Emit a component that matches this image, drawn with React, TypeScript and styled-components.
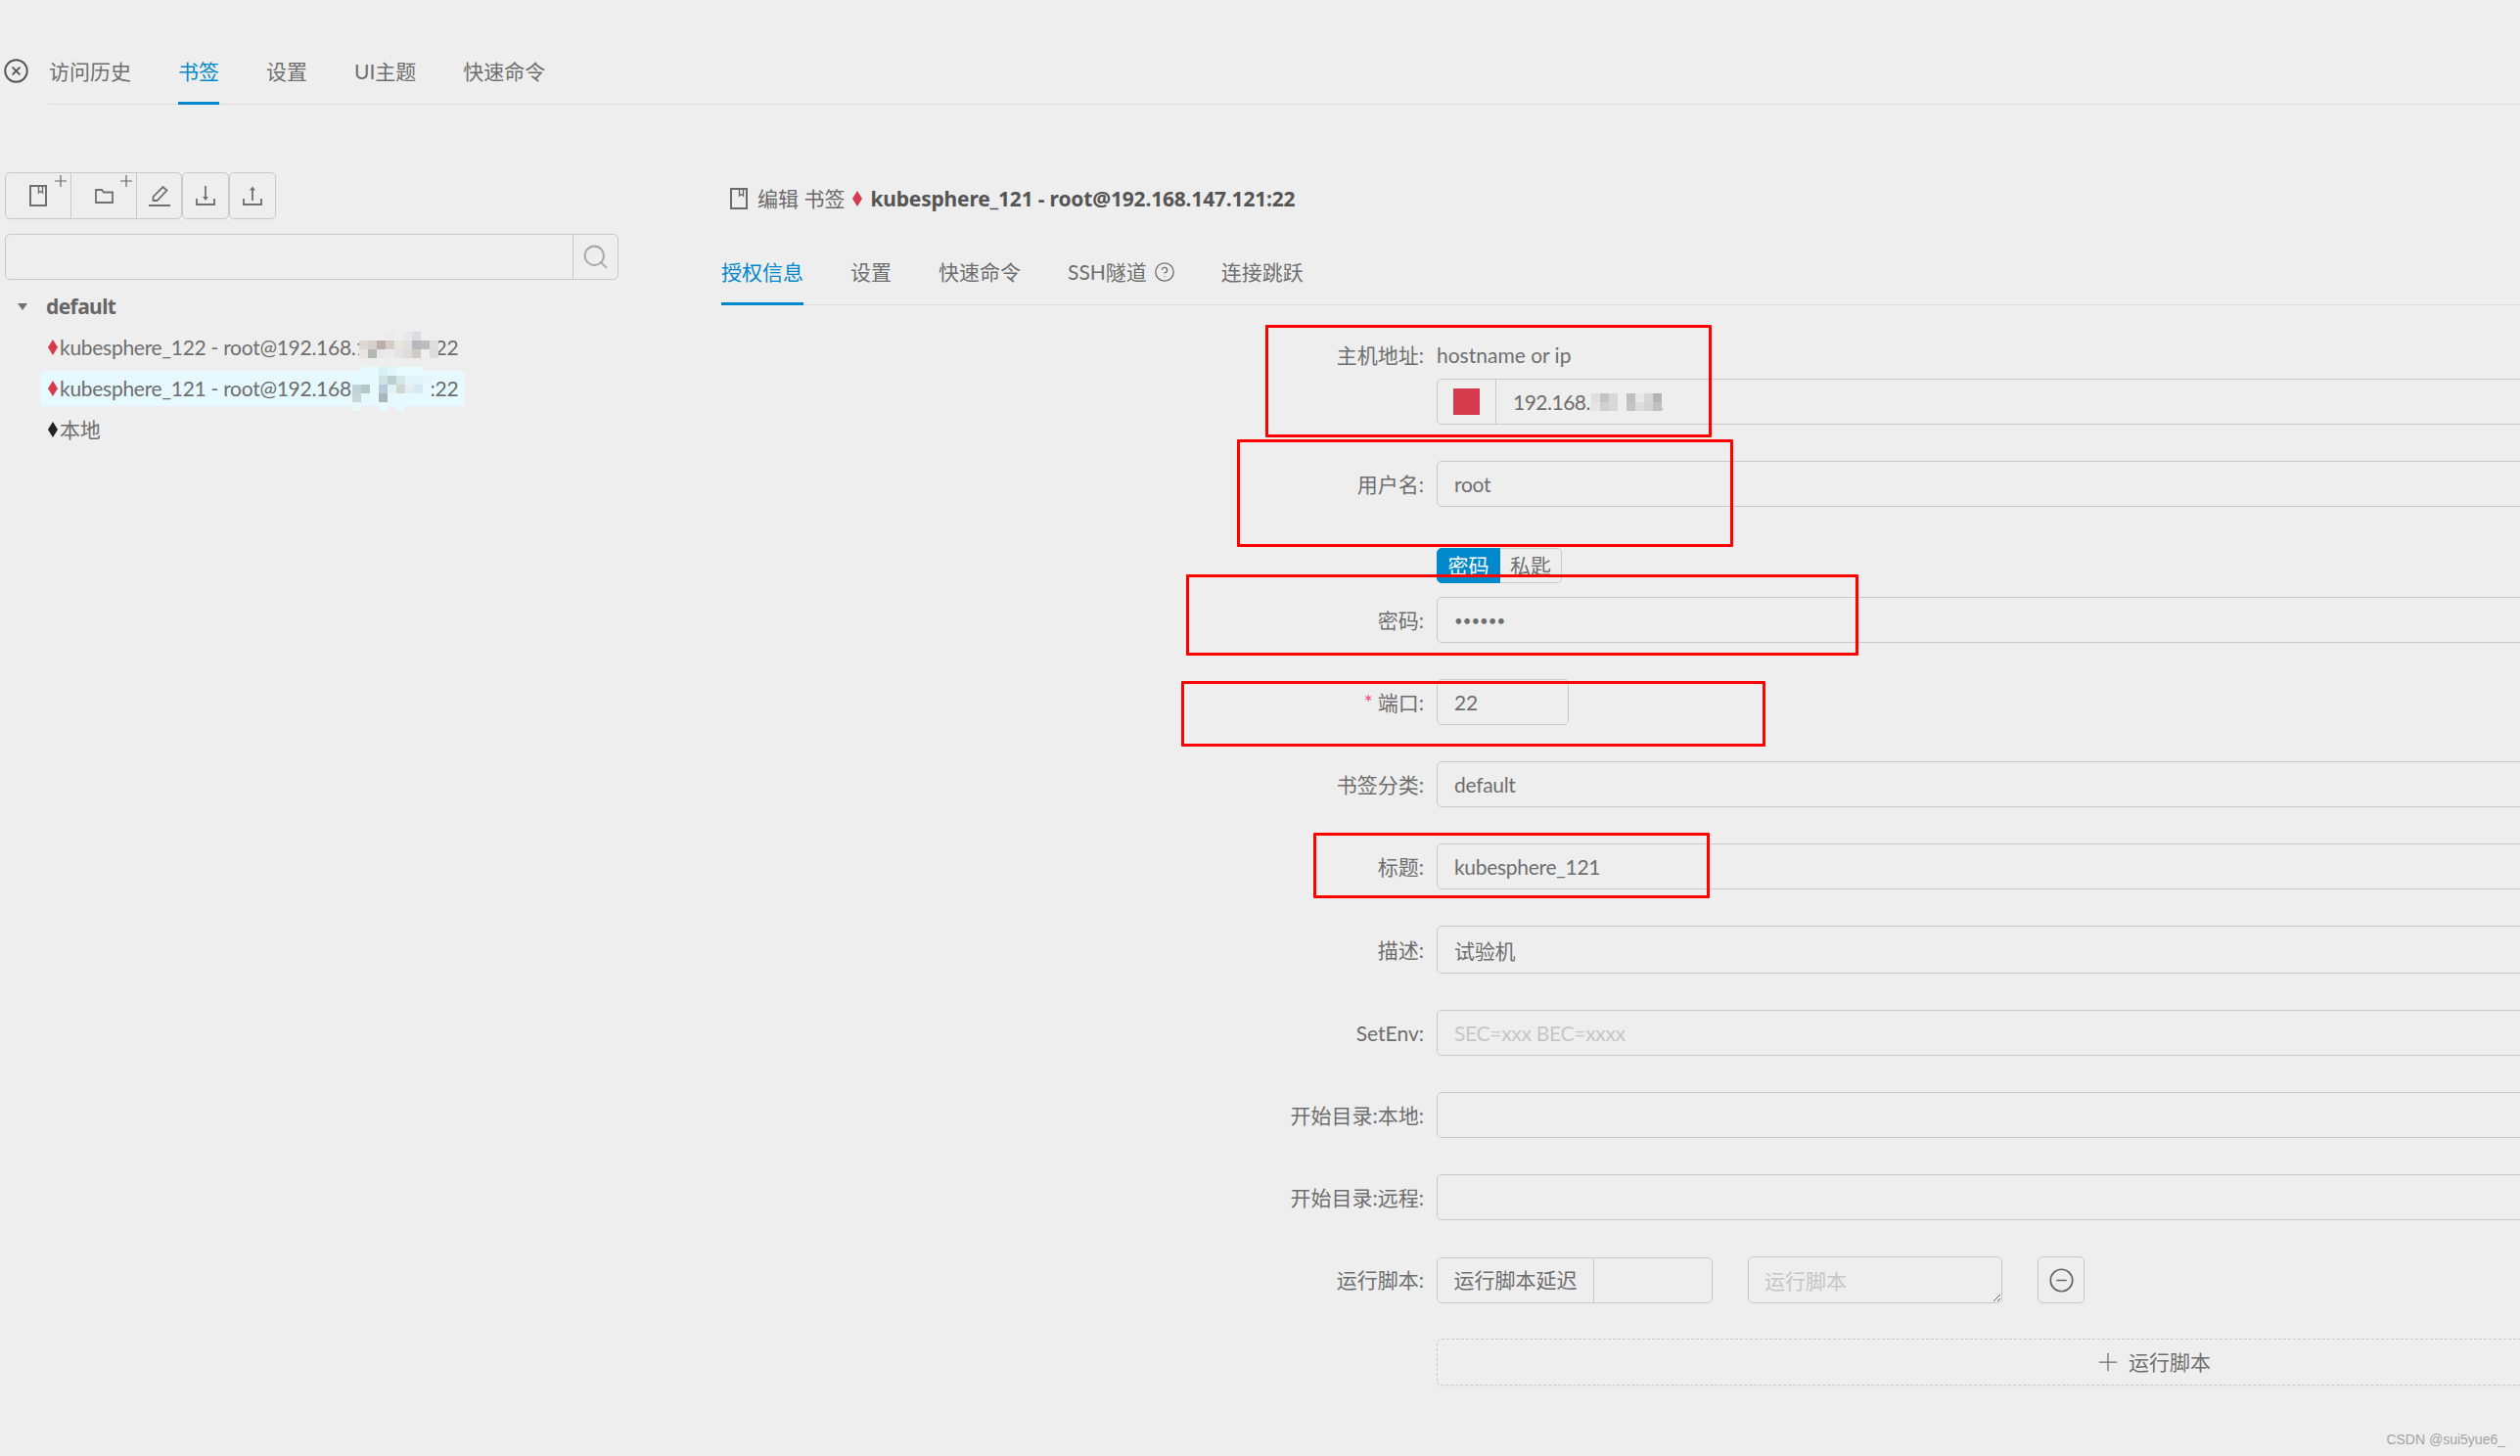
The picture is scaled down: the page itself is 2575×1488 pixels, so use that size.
import styled, { createGlobalStyle } from 'styled-components';
import { CircleHelp, CircleMinus, CircleX, Plus, Search } from 'lucide-react';

const BLUE = '#0088cc';
const LINE = '#c9c9c9';
const TEXT = '#6e6e6e';

const GlobalStyle = createGlobalStyle`
  html, body {
    margin: 0;
    padding: 0;
    background: #eeeeee;
  }
  * {
    box-sizing: border-box;
  }
`;

const Page = styled.div`
  position: relative;
  width: 2575px;
  height: 1488px;
  overflow: hidden;
  background: #eeeeee;
  color: ${TEXT};
  font-family: Lato, "Noto Sans CJK SC", sans-serif;
  font-size: 21px;
  line-height: 32px;
`;

const Header = styled.div`
  display: flex;
  align-items: flex-start;
`;

const CloseButton = styled.div`
  display: flex;
  width: 50px;
  padding: 59px 0 0 3px;
  color: #555;
`;

const TabBar = styled.div`
  display: flex;
  flex: 1;
  gap: 48px;
  border-bottom: 1px solid #dcdcdc;
`;

const Tab = styled.div<{ $active?: boolean; $top: number }>`
  display: flex;
  align-items: center;
  gap: 7px;
  margin-bottom: -1px;
  padding: ${(p) => p.$top}px 0 15px;
  border-bottom: 3px solid ${(p) => (p.$active ? BLUE : 'transparent')};
  color: ${(p) => (p.$active ? BLUE : TEXT)};
`;

const Main = styled.div`
  display: flex;
`;

const Sidebar = styled.div`
  flex: none;
  width: 737px;
  padding: 69px 0 0 5px;
`;

const Toolbar = styled.div`
  display: flex;
  height: 48px;
`;

const ToolGroup = styled.div`
  display: flex;
  overflow: hidden;
  border: 1px solid ${LINE};
  border-radius: 5px;
  box-shadow: 0 2px 0 rgba(0, 0, 0, 0.015);
`;

const ToolButton = styled.div<{ $width: number }>`
  position: relative;
  display: flex;
  align-items: center;
  justify-content: center;
  width: ${(p) => p.$width}px;
  color: #707070;

  & + & {
    border-left: 1px solid ${LINE};
  }
`;

const CornerPlus = styled.svg`
  position: absolute;
  top: 2px;
  right: 4px;
`;

const SearchBox = styled.div`
  display: flex;
  width: 627px;
  height: 47px;
  margin-top: 15px;
  border: 1px solid ${LINE};
  border-radius: 5px;
`;

const SearchInput = styled.div`
  flex: 1;
`;

const SearchButton = styled.div`
  display: flex;
  align-items: center;
  justify-content: center;
  width: 46px;
  border-left: 1px solid ${LINE};
  color: #aaaaaa;
`;

const Tree = styled.div`
  margin-top: 6px;
`;

const GroupRow = styled.div`
  display: flex;
  align-items: center;
  height: 42px;
  padding-left: 13px;
  font-family: "Noto Sans", "Noto Sans CJK SC", sans-serif;
  font-weight: 700;
  font-size: 21px;
  letter-spacing: -0.6px;
  color: #666;
`;

const Caret = styled.span`
  width: 0;
  height: 0;
  margin-right: 19px;
  border-left: 5px solid transparent;
  border-right: 5px solid transparent;
  border-top: 7px solid #707070;
`;

const TreeRow = styled.div<{ $selected?: boolean }>`
  position: relative;
  display: flex;
  align-items: center;
  width: fit-content;
  height: 36px;
  margin: 3px 0 6px 36px;
  padding: 0 7px 0 8px;
  border-radius: 4px;
  background: ${(p) => (p.$selected ? '#e6f9ff' : 'transparent')};
  letter-spacing: -0.28px;
`;

const Content = styled.div`
  flex: none;
  width: 1838px;
`;

const EditTitle = styled.div`
  display: flex;
  align-items: center;
  height: 32px;
  margin: 80px 0 43px 9px;
  color: #6a6a6a;
`;

const TitleLead = styled.span`
  margin: 0 8px 0 10px;
`;

const TitleHost = styled.b`
  margin-left: 8px;
  color: #555555;
  font-family: "Noto Sans", "Noto Sans CJK SC", sans-serif;
  font-weight: 700;
  letter-spacing: -0.18px;
`;

const InnerTabs = styled(TabBar)`
  flex: none;
`;

const HelpIcon = styled(CircleHelp)`
  margin-right: -1px;
`;

const Form = styled.div`
  padding-top: 27px;
`;

const Row = styled.div<{ $gap?: number }>`
  display: flex;
  align-items: center;
  margin-bottom: ${(p) => p.$gap ?? 37}px;
`;

const Label = styled.div`
  flex: none;
  width: 731px;
  padding-right: 13px;
  text-align: right;
  white-space: nowrap;
`;

const Star = styled.span`
  margin-right: 5px;
  color: #f0487a;
`;

const Hint = styled.div`
  height: 48px;
  line-height: 47px;
`;

const FieldBox = styled.input<{ $width?: number; $height?: number }>`
  display: block;
  flex: none;
  width: ${(p) => p.$width ?? 1462}px;
  height: ${(p) => p.$height ?? 47}px;
  padding: 0 17px;
  border: 1px solid ${LINE};
  border-radius: 5px;
  outline: none;
  background: transparent;
  color: ${TEXT};
  font: inherit;
  letter-spacing: -0.3px;

  &::placeholder {
    color: #c6c6c6;
  }
`;

const PasswordBox = styled(FieldBox)`
  font-size: 15px;
  letter-spacing: 0;
`;

const Addon = styled.div<{ $width?: number }>`
  flex: none;
  display: flex;
  align-items: center;
  justify-content: center;
  width: ${(p) => p.$width}px;
  height: 100%;
  border-right: 1px solid ${LINE};
`;

const InputGroup = styled.div<{ $width?: number }>`
  position: relative;
  display: flex;
  flex: none;
  align-items: center;
  width: ${(p) => p.$width ?? 1462}px;
  height: 47px;
  border: 1px solid ${LINE};
  border-radius: 5px;
`;

const GroupText = styled.div`
  padding-left: 17px;
  letter-spacing: -0.5px;
`;

const Swatch = styled.span`
  width: 27px;
  height: 27px;
  background: #d63b4e;
`;

const RadioGroup = styled.div`
  display: flex;
  height: 36px;
  margin-bottom: 14px;
  margin-left: 731px;
`;

const Radio = styled.div<{ $active?: boolean }>`
  display: flex;
  align-items: center;
  justify-content: center;
  width: ${(p) => (p.$active ? 65 : 63)}px;
  border: 1px solid ${(p) => (p.$active ? BLUE : LINE)};
  border-left-width: ${(p) => (p.$active ? 1 : 0)}px;
  border-radius: ${(p) => (p.$active ? '5px 0 0 5px' : '0 5px 5px 0')};
  background: ${(p) => (p.$active ? BLUE : 'transparent')};
  color: ${(p) => (p.$active ? '#ffffff' : TEXT)};
`;

const ScriptArea = styled.textarea`
  flex: none;
  width: 260px;
  height: 48px;
  margin-left: 36px;
  padding: 8px 16px;
  border: 1px solid ${LINE};
  border-radius: 5px;
  outline: none;
  background: transparent;
  font: inherit;

  &::placeholder {
    color: #c6c6c6;
  }
`;

const IconButton = styled.div`
  display: flex;
  flex: none;
  align-items: center;
  justify-content: center;
  width: 48px;
  height: 48px;
  margin-left: 36px;
  border: 1px solid ${LINE};
  border-radius: 5px;
  box-shadow: 0 2px 0 rgba(0, 0, 0, 0.015);
  color: #666;
`;

const DashedButton = styled.div`
  display: flex;
  align-items: center;
  justify-content: center;
  gap: 6px;
  width: 1462px;
  height: 48px;
  margin-left: 731px;
  border: 1px dashed ${LINE};
  border-radius: 5px;
  box-shadow: 0 2px 0 rgba(0, 0, 0, 0.015);
`;

const Mosaic = styled.svg<{ $left: number; $top: number }>`
  position: absolute;
  left: ${(p) => p.$left}px;
  top: ${(p) => p.$top}px;
`;

const RedBox = styled.div<{ $x: number; $y: number; $w: number; $h: number }>`
  position: absolute;
  left: ${(p) => p.$x}px;
  top: ${(p) => p.$y}px;
  width: ${(p) => p.$w}px;
  height: ${(p) => p.$h}px;
  border: 3px solid #ff0000;
  border-radius: 1px;
  pointer-events: none;
`;

const Watermark = styled.div`
  position: absolute;
  right: 15px;
  bottom: 8px;
  color: #a3a3a3;
  font-family: "Liberation Sans", sans-serif;
  font-size: 14px;
  line-height: 18px;
`;

const DiamondMark = styled.svg<{ $gap: number }>`
  flex: none;
  margin-right: ${(p) => p.$gap}px;
`;

function Diamond({ color, gap = 2 }: { color: string; gap?: number }) {
  return (
    <DiamondMark $gap={gap} width="10" height="16" viewBox="0 0 10 16">
      <polygon points="5,0 10,8 5,16 0,8" fill={color} />
    </DiamondMark>
  );
}

function BookIcon() {
  return (
    <svg width="18" height="22" viewBox="0 0 18 22" fill="none" stroke="currentColor" strokeWidth="2">
      <rect x="1" y="1" width="16" height="20" />
      <path d="M9.5 1v7l2-1.5 2 1.5V1" strokeWidth="1.4" />
    </svg>
  );
}

function FolderIcon() {
  return (
    <svg width="19" height="15" viewBox="0 0 19 15" fill="none" stroke="currentColor" strokeWidth="1.8">
      <path d="M1 1h6l2 2.5h9V14H1z" />
    </svg>
  );
}

function PenIcon() {
  return (
    <svg width="22" height="22" viewBox="0 0 22 22" fill="none" stroke="currentColor" strokeWidth="1.8">
      <path d="M4.5 16v-4L14.5 2l4 3.5L8.5 16z" />
      <path d="M0 21h22" strokeWidth="2.2" />
    </svg>
  );
}

function TrayIcon({ up }: { up?: boolean }) {
  return (
    <svg width="20" height="20" viewBox="0 0 20 20" fill="none" stroke="currentColor" strokeWidth="1.8">
      <path d="M1 13v6h18v-6" />
      {up ? (
        <>
          <path d="M10 15V3" />
          <path d="M7 4.5L10 0.5l3 4z" fill="currentColor" stroke="none" />
        </>
      ) : (
        <>
          <path d="M10 0v12" />
          <path d="M7 11l3 4 3-4z" fill="currentColor" stroke="none" />
        </>
      )}
    </svg>
  );
}

function SmallPlus() {
  return (
    <CornerPlus width="12" height="12" viewBox="0 0 12 12" stroke="#666" strokeWidth="1.2">
      <path d="M6 0v12M0 6h12" />
    </CornerPlus>
  );
}

type Cell = [number, number, string];

function Pixels({ cells, width, height, left, top, size = 9 }: { cells: Cell[]; width: number; height: number; left: number; top: number; size?: number }) {
  return (
    <Mosaic $left={left} $top={top} width={width} height={height} shapeRendering="crispEdges">
      {cells.map(([c, r, fill]) => (
        <rect key={`${c}-${r}`} x={c * size} y={r * size} width={size} height={size} fill={fill} />
      ))}
    </Mosaic>
  );
}

const row1Cells: Cell[] = [
  [3, 0, '#ebebeb'], [5, 0, '#e8e8ea'], [6, 0, '#dcdcde'],
  [0, 1, '#dcd8d4'], [1, 1, '#d6d0cc'], [2, 1, '#bcaea6'], [3, 1, '#d0ccc6'], [4, 1, '#e8e6dc'], [5, 1, '#e0e0e0'], [6, 1, '#b8b8ba'], [7, 1, '#bdbdbf'], [8, 1, '#dedede'],
  [0, 2, '#e8e4de'], [1, 2, '#b4b8b4'], [2, 2, '#e6e8ea'], [3, 2, '#ebebeb'], [4, 2, '#e4e4e8'], [5, 2, '#e2dcd6'], [6, 2, '#cfcbc8'], [7, 2, '#eeeeee'], [8, 2, '#dcdcdc'],
];

const row2Cells: Cell[] = [
  [1, 0, '#e6f9ff'], [2, 0, '#e6f9ff'], [3, 0, '#d8f0f4'], [4, 0, '#e0f6fa'], [5, 0, '#e8fbff'], [6, 0, '#e8fbff'], [7, 0, '#e8fbff'],
  [0, 1, '#e6f9ff'], [1, 1, '#e6f9ff'], [2, 1, '#e6f9ff'], [3, 1, '#cfe3e6'], [4, 1, '#bcd0d0'], [5, 1, '#d4e6e8'], [6, 1, '#e0f4fa'], [7, 1, '#e0f2fa'], [8, 1, '#e4f6fc'],
  [0, 2, '#c0d4d8'], [1, 2, '#b4c8c8'], [2, 2, '#e6f9ff'], [3, 2, '#b8cad8'], [4, 2, '#e2f2f2'], [5, 2, '#d2d6d0'], [6, 2, '#e2eef4'], [7, 2, '#d8e8f2'], [8, 2, '#e6f9ff'],
  [0, 3, '#c6d6da'], [1, 3, '#e4f8fc'], [2, 3, '#e6f9ff'], [3, 3, '#a8b8b8'], [4, 3, '#e6f9ff'], [5, 3, '#e6f9ff'], [6, 3, '#e6f9ff'], [7, 3, '#e6f9ff'], [8, 3, '#e6f9ff'],
  [0, 4, '#eaf8fa'], [3, 4, '#e6fbff'], [5, 4, '#e6f9ff'],
];

const hostCells: Cell[] = [
  [0, 0, '#e0e0e0'], [1, 0, '#c4c4c4'], [2, 0, '#d8d8d8'], [3, 0, '#eeeeee'], [4, 0, '#bfbfbf'], [5, 0, '#e8e8e8'], [6, 0, '#d6d6d6'], [7, 0, '#b4b4b4'],
  [0, 1, '#e6e6e6'], [1, 1, '#d0d0d0'], [2, 1, '#d8d8d8'], [3, 1, '#eeeeee'], [4, 1, '#c4c4c4'], [5, 1, '#dcdcdc'], [6, 1, '#d4d4d4'], [7, 1, '#c0c0c0'],
];

const redBoxes = [
  { x: 1293, y: 332, w: 456, h: 115 },
  { x: 1264, y: 449, w: 507, h: 110 },
  { x: 1212, y: 587, w: 687, h: 83 },
  { x: 1207, y: 696, w: 597, h: 67 },
  { x: 1342, y: 851, w: 405, h: 67 },
];

const TOP_TABS = ['访问历史', '书签', '设置', 'UI主题', '快速命令'];

export default function App() {
  return (
    <Page>
      <GlobalStyle />
      <Header>
        <CloseButton>
          <CircleX size={27} strokeWidth={1.7} />
        </CloseButton>
        <TabBar>
          {TOP_TABS.map((name) => (
            <Tab key={name} $top={57} $active={name === '书签'}>{name}</Tab>
          ))}
        </TabBar>
      </Header>
      <Main>
        <Sidebar>
          <Toolbar>
            <ToolGroup>
              <ToolButton $width={66}><BookIcon /><SmallPlus /></ToolButton>
              <ToolButton $width={67}><FolderIcon /><SmallPlus /></ToolButton>
              <ToolButton $width={46}><PenIcon /></ToolButton>
            </ToolGroup>
            <ToolGroup>
              <ToolButton $width={46}><TrayIcon /></ToolButton>
            </ToolGroup>
            <ToolGroup>
              <ToolButton $width={46}><TrayIcon up /></ToolButton>
            </ToolGroup>
          </Toolbar>
          <SearchBox>
            <SearchInput />
            <SearchButton><Search size={29} strokeWidth={1.7} /></SearchButton>
          </SearchBox>
          <Tree>
            <GroupRow><Caret />default</GroupRow>
            <TreeRow>
              <Diamond color="#d63b4e" />kubesphere_122 - root@192.168.147.122:22
              <Pixels cells={row1Cells} left={326} top={2} width={81} height={27} />
            </TreeRow>
            <TreeRow $selected>
              <Diamond color="#d63b4e" />kubesphere_121 - root@192.168.147.121:22
              <Pixels cells={row2Cells} left={319} top={-4} width={81} height={45} />
            </TreeRow>
            <TreeRow>
              <Diamond color="#222222" />本地
            </TreeRow>
          </Tree>
        </Sidebar>
        <Content>
          <EditTitle>
            <BookIcon />
            <TitleLead>编辑 书签</TitleLead>
            <Diamond color="#d63b4e" gap={0} />
            <TitleHost>kubesphere_121 - root@192.168.147.121:22</TitleHost>
          </EditTitle>
          <InnerTabs>
            <Tab $top={0} $active>授权信息</Tab>
            <Tab $top={0}>设置</Tab>
            <Tab $top={0}>快速命令</Tab>
            <Tab $top={0}>SSH隧道<HelpIcon size={22} strokeWidth={1.4} /></Tab>
            <Tab $top={0}>连接跳跃</Tab>
          </InnerTabs>
          <Form>
            <Row $gap={0}>
              <Label>主机地址:</Label>
              <Hint>hostname or ip</Hint>
            </Row>
            <Row>
              <Label />
              <InputGroup>
                <Addon $width={60}><Swatch /></Addon>
                <GroupText>192.168.147.121</GroupText>
                <Pixels cells={hostCells} left={157} top={14} width={72} height={18} />
              </InputGroup>
            </Row>
            <Row $gap={42}>
              <Label>用户名:</Label>
              <FieldBox readOnly value="root" />
            </Row>
            <RadioGroup>
              <Radio $active>密码</Radio>
              <Radio>私匙</Radio>
            </RadioGroup>
            <Row>
              <Label>密码:</Label>
              <PasswordBox readOnly type="password" value="123456" />
            </Row>
            <Row>
              <Label><Star>*</Star>端口:</Label>
              <FieldBox readOnly value="22" $width={135} />
            </Row>
            <Row>
              <Label>书签分类:</Label>
              <FieldBox readOnly value="default" />
            </Row>
            <Row>
              <Label>标题:</Label>
              <FieldBox readOnly value="kubesphere_121" />
            </Row>
            <Row>
              <Label>描述:</Label>
              <FieldBox readOnly value="试验机" $height={49} />
            </Row>
            <Row>
              <Label>SetEnv:</Label>
              <FieldBox readOnly placeholder="SEC=xxx BEC=xxxx" />
            </Row>
            <Row>
              <Label>开始目录:本地:</Label>
              <FieldBox readOnly />
            </Row>
            <Row>
              <Label>开始目录:远程:</Label>
              <FieldBox readOnly />
            </Row>
            <Row $gap={36}>
              <Label>运行脚本:</Label>
              <InputGroup $width={282}>
                <Addon $width={160}>运行脚本延迟</Addon>
              </InputGroup>
              <ScriptArea readOnly placeholder="运行脚本" />
              <IconButton><CircleMinus size={27} strokeWidth={1.5} /></IconButton>
            </Row>
            <DashedButton>
              <Plus size={30} strokeWidth={1} />运行脚本
            </DashedButton>
          </Form>
        </Content>
      </Main>
      {redBoxes.map((b) => (
        <RedBox key={b.x} $x={b.x} $y={b.y} $w={b.w} $h={b.h} />
      ))}
      <Watermark>CSDN @sui5yue6_</Watermark>
    </Page>
  );
}
